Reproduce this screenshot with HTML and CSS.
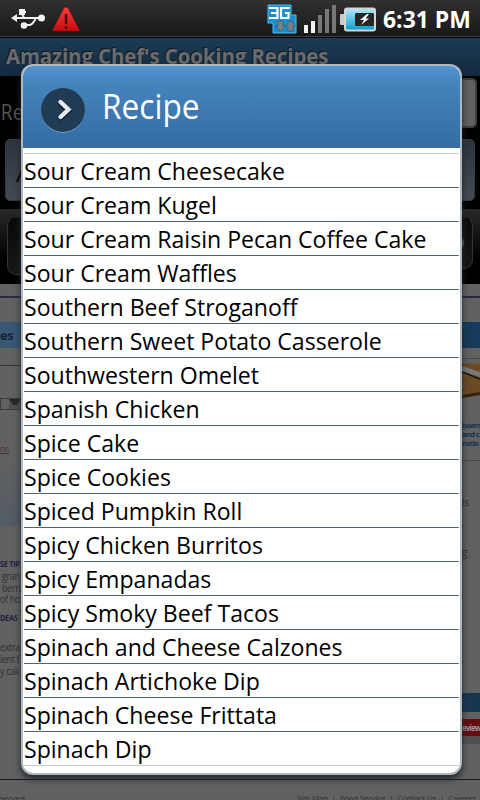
FILE: index.html
```html
<!DOCTYPE html>
<html lang="en">
<head>
<meta charset="utf-8">
<title>Amazing Chef's Cooking Recipes</title>
<link rel="stylesheet" href="styles.css">
</head>
<body>
<div class="screen">
  <header class="status">
    <svg class="usb" width="34" height="24" viewBox="0 0 34 24" fill="none" stroke="#f2f2f2" stroke-width="2"><path d="M4 12H30M13 12C11 9 11 6 14 6H15M14 19H18C22 19 23 15 25 12"/><path d="M0 12L6 8V16Z" fill="#f2f2f2" stroke="none"/><rect x="8" y="3" width="6" height="6" fill="#f2f2f2" stroke="none"/><circle cx="30.500" cy="12" r="3.500" fill="#f2f2f2" stroke="none"/><circle cx="13" cy="19.500" r="3.300" fill="#f2f2f2" stroke="none"/></svg>
    <svg class="warn" width="30" height="26" viewBox="0 0 30 26"><defs><linearGradient id="r" x2="0" y2="1"><stop stop-color="#f8403c"/><stop offset="1" stop-color="#c90810"/></linearGradient></defs><path d="M13 2Q15 0 17 2L28.500 24Q28.500 25 27 25H3Q1.500 25 1.500 24Z" fill="url(#r)" stroke="#7c0b0c" stroke-width=".6"/><path d="M15 8V18" stroke="#420609" stroke-width="2.400"/><circle cx="15" cy="21.500" r="1.600" fill="#420609"/></svg>
    <span class="grow"></span>
    <svg class="net" width="32" height="30" viewBox="0 0 32 30"><path d="M1 1H24V11H29V29H6V19H1Z" fill="#198fd0" stroke="#52bbea"/><path d="M2 4H10.500V14H2M4 9H10.500M21.500 5V4H14V14H21.500V9H18" fill="none" stroke="#fff" stroke-width="2.200"/><path d="M11 17H16V22H18.500L13.500 27.500L8.500 22H11ZM21 27V22H18.500L23.500 16L28.500 22H26V27Z" fill="#76828a" stroke="#39586c" stroke-width=".7"/></svg>
    <svg class="signal" width="34" height="28" viewBox="0 0 34 28"><path d="M0 20H4V28H0ZM7 16H11V28H7Z" fill="#f2f2f2"/><path d="M14 10H18V28H14ZM21 4H25V28H21ZM28 0H32V28H28Z" fill="#777"/></svg>
    <svg class="battery" width="37" height="25" viewBox="0 0 37 25"><defs><linearGradient id="b" x2="0" y2="1"><stop stop-color="#b2eafa"/><stop offset=".5" stop-color="#5cc5e6"/><stop offset="1" stop-color="#079acf"/></linearGradient></defs><rect x="0" y="7" width="6" height="11" rx="1" fill="#c9cccd"/><rect x="5" y="1.500" width="30" height="22" rx="2" fill="url(#b)" stroke="#d2d5d6" stroke-width="2"/><rect x="15" y="6" width="19" height="13" rx="1.500" fill="#242628"/><path d="M27 7L20 13H24L21 18L29 11.500H25.500L29 7Z" fill="#fff"/></svg>
    <span class="clock">6:31 PM</span>
  </header>
  <div class="apptitle"><span>Amazing Chef's Cooking Recipes</span></div>
  <section class="form">
    <div class="field"><span>Re</span><i class="input"></i></div>
    <div class="spinner">A</div>
  </section>
  <section class="toolbar"><i class="tool"></i><i class="tool"><b></b></i></section>
  <section class="web">
    <div class="top"></div>
    <div class="columns">
      <div class="left">
        <div class="band">es</div>
        <div class="rule"></div>
        <div class="select"><i></i></div>
        <div class="link">ns</div>
        <div class="tint"></div>
        <h4>SE TIP</h4>
        <p>&nbsp;gran<br>&nbsp;berri<br>of ho</p>
        <h4 class="ideas">DEAS</h4>
        <p class="more">extra<br>ient f<br>y cak</p>
      </div>
      <div class="right">
        <div class="band"></div>
        <div class="rule"></div>
        <svg class="board" width="18" height="37" viewBox="0 0 18 37"><path d="M0 1L18 2V33L0 36Z" fill="#6b4a24"/><path d="M0 33L18 30V33L0 36Z" fill="#352310"/><path d="M0 4L18 10V15L0 9Z" fill="#77797b"/><path d="M0 10L18 17" stroke="#161616" stroke-width="1.500"/></svg>
        <div class="promo">board<br>and c<br>natio</div>
        <div class="rule second"></div>
        <div class="word">ls</div>
        <div class="word last">g</div>
        <div class="bar"></div>
        <div class="review">eview</div>
      </div>
    </div>
    <footer><span>served.</span><span class="links">Site Map &nbsp;| &nbsp;Food Service &nbsp;| &nbsp;Contact Us &nbsp;| &nbsp;Careers</span></footer>
  </section>
  <div class="dialog">
    <div class="head">
      <svg width="46" height="46" viewBox="0 0 46 46"><circle cx="23" cy="23.700" r="22" fill="#7dacd5"/><circle cx="23" cy="23" r="22" fill="#213b54"/><path d="M20.500 16L28.500 23L20.500 30" transform="translate(0 1)" fill="none" stroke="#0d2033" stroke-width="5" stroke-linecap="round"/><path d="M20.500 15L28.500 22.500L20.500 30" fill="none" stroke="#e8eaed" stroke-width="4.300" stroke-linecap="round" stroke-linejoin="miter"/></svg>
      <span>Recipe</span>
    </div>
    <ul>
      <li>Sour Cream Cheesecake</li><li>Sour Cream Kugel</li><li>Sour Cream Raisin Pecan Coffee Cake</li><li>Sour Cream Waffles</li><li>Southern Beef Stroganoff</li><li>Southern Sweet Potato Casserole</li><li>Southwestern Omelet</li><li>Spanish Chicken</li><li>Spice Cake</li><li>Spice Cookies</li><li>Spiced Pumpkin Roll</li><li>Spicy Chicken Burritos</li><li>Spicy Empanadas</li><li>Spicy Smoky Beef Tacos</li><li>Spinach and Cheese Calzones</li><li>Spinach Artichoke Dip</li><li>Spinach Cheese Frittata</li><li>Spinach Dip</li>
    </ul>
  </div>
</div>
</body>
</html>
```
FILE: styles.css
```css
* { box-sizing: border-box; }
body { margin: 0; background: #000; font-family: "Open Sans", "Noto Sans", sans-serif; }
.screen { position: relative; width: 480px; height: 800px; overflow: hidden; display: flex; flex-direction: column; }
.screen > * { flex-shrink: 0; }
.status { height: 38px; display: flex; align-items: flex-start; background: linear-gradient(#303030, #181818); border-bottom: 1px solid #000; box-shadow: inset 0 -1px #38444c; }
.usb { margin: 6px 0 0 11px; }
.warn { margin: 6px 0 0 6px; }
.grow { flex: 1; }
.net { margin-top: 4px; }
.signal { margin: 5px 0 0 5px; }
.battery { margin: 7px 0 0 2px; }
.clock { width: 89px; margin: 2px 8px 0 6px; color: #fff; font: bold 24px/34px "Open Sans", sans-serif; transform: scaleX(.955); transform-origin: left; white-space: nowrap; }
.apptitle { height: 38px; padding-left: 6px; background: linear-gradient(#1d3b55, #132a40); color: #6b6b6b; font-size: 22px; line-height: 35px; font-weight: bold; text-shadow: -1px -1px #101820; white-space: nowrap; }
.apptitle span { display: inline-block; transform: scaleX(.92); transform-origin: left; }
.form { height: 133px; background: #000; }
.field { display: flex; height: 63px; color: #555; font-size: 22px; line-height: 70px; }
.field span { padding-left: 1px; transform: scaleX(.87); transform-origin: left; }
.input { margin: 2px 3px 0 auto; width: 80px; height: 50px; border: 2px solid #3e3e3e; border-radius: 5px; background: #606060; }
.spinner { height: 62px; margin: 0 5px; padding-left: 10px; border: 1px solid #343b43; border-radius: 5px; background: linear-gradient(#2c333d, #454b53); color: #000; font-size: 24px; line-height: 65px; }
.toolbar { height: 75px; display: flex; justify-content: space-between; padding: 8px 7px; background: linear-gradient(#292929, #000 65%); }
.tool { width: 36px; height: 58px; border: 1px solid #333; border-top-color: #161616; border-radius: 9px; display: flex; align-items: center; background: linear-gradient(#080808, #171717); }
.tool b { width: 26px; height: 18px; border-radius: 9px; background: #555; }
.tool:last-child { height: 52px; }
.web { height: 516px; background: #616161; color: #303030; display: flex; flex-direction: column; }
.top { height: 14px; border-bottom: 2px solid #292942; }
.columns { flex: 1; display: flex; justify-content: space-between; }
.left { width: 60px; padding-top: 24px; font-size: 10px; letter-spacing: -.4px; white-space: nowrap; }
.band { height: 26px; background: #385775; color: #15253a; font: bold 13px/26px "Open Sans", sans-serif; }
.rule { height: 1px; margin-top: 17px; background: #333; }
.select { height: 12px; width: 22px; margin-top: 32px; border: 1px solid #3d3d3d; display: flex; justify-content: flex-end; }
.select i { width: 12px; border: 4px solid #505050; border-top: 6px solid #292929; }
.link { height: 14px; margin-top: 32px; color: #52303b; font-size: 9px; line-height: 14px; text-decoration: underline; }
.tint { height: 70px; background: linear-gradient(#616161, #535b65); }
h4 { margin: 31px 0 0; height: 14px; color: #20203f; font: bold 9.5px/14px "Open Sans", sans-serif; letter-spacing: -.3px; transform: scaleX(.76); transform-origin: left; }
p { margin: 0; line-height: 11.7px; transform: scaleX(.9); transform-origin: left; }
.left h4.ideas { margin-top: 5px; }
.more { margin-top: 17px; }
.right { width: 18px; padding-top: 24px; overflow: hidden; font-size: 10px; letter-spacing: -.2px; }
.right .band { background: #173b5c; }
.right .rule { margin-top: 10px; background: #464646; }
.board { display: block; margin-top: 3px; }
.promo { margin-top: 22px; height: 27px; color: #192f50; font: bold 7.5px/9px "Open Sans", sans-serif; letter-spacing: -.6px; white-space: nowrap; }
.right .second { margin-top: 12px; }
.word { margin-top: 34px; line-height: 14px; }
.last { margin-top: 36px; }
.bar { height: 19px; margin-top: 134px; background: #173650; }
.review { height: 17px; margin-top: 7px; background: #650c12; color: #999; font: bold 8px/17px "Open Sans", sans-serif; letter-spacing: -.9px; box-shadow: 0 8px #505050; }
footer { height: 21px; border-top: 1px solid #17171e; display: flex; justify-content: space-between; font-size: 8px; line-height: 36px; white-space: nowrap; overflow: hidden; padding-right: 4px; }
.links { letter-spacing: -.15px; }
.dialog { position: absolute; left: 21px; top: 64px; width: 441px; height: 711px; border: 2px solid #acb7bf; border-radius: 12px; background: #fff; overflow: hidden; box-shadow: 0 4px 7px #20262b; }
.head { height: 82px; display: flex; align-items: flex-start; background: linear-gradient(#5594d0, #4683bd 20%, #336ca3); color: #fff; font-size: 34px; line-height: 80px; }
.head svg { margin: 21px 0 0 17px; }
.head span { margin-left: 16px; transform: scaleX(.93); transform-origin: left; }
ul { list-style: none; margin: 5px 1px 0; padding: 0; border-top: 1px solid #d2cfcb; }
li { width: calc(100% / .962); height: 34px; border-bottom: 1px solid #53636b; color: #000; font-size: 24px; line-height: 34px; transform: scaleX(.962); transform-origin: left; white-space: nowrap; }
li:last-child { border-color: #c4c8cb; }
```
